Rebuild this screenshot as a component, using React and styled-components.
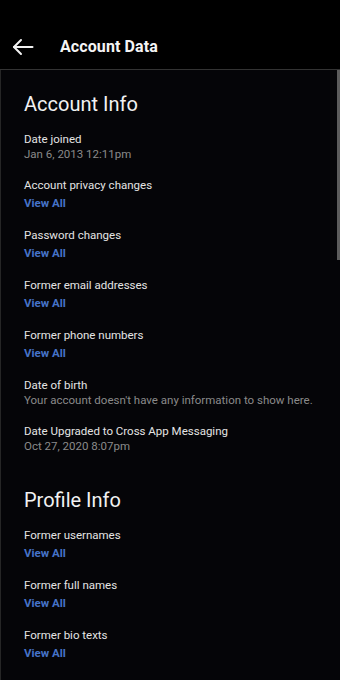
import React from "react"
import styled, { createGlobalStyle } from "styled-components"

const GlobalStyle = createGlobalStyle`
  html, body {
    margin: 0;
    padding: 0;
    background: #000;
  }
  body {
    font-family: Roboto, "Liberation Sans", sans-serif;
    -webkit-font-smoothing: antialiased;
  }
`
const Screen = styled.div`
  width: 340px;
  height: 680px;
  display: flex;
  flex-direction: column;
  background: #000;
  overflow: hidden;
`
const Header = styled.div`
  height: 45px;
  padding-top: 24px;
  display: flex;
  align-items: center;
  border-bottom: 1px solid #333;
`
const BackButton = styled.div`
  width: 24px;
  height: 24px;
  margin-left: 11px;
  margin-right: 25px;
  display: flex;
  color: #f2f2f2;
`
const Title = styled.h1`
  margin: 0;
  font-size: 16px;
  font-weight: 700;
  color: #f4f4f4;
  letter-spacing: 0.1px;
`
const Panel = styled.div`
  position: relative;
  flex: 1;
  background: #050508;
  border-left: 1px solid #262626;
  padding: 22px 0 0 23px;
`
const ScrollThumb = styled.div`
  position: absolute;
  top: 0;
  right: 0;
  width: 3px;
  height: 190px;
  background: #5c5c5c;
`
const Section = styled.section`
  display: flex;
  flex-direction: column;
  gap: 16px;
  & + & {
    margin-top: 35px;
  }
`
const SectionTitle = styled.h2`
  margin: 0 0 -1px;
  font-size: 20px;
  line-height: 24px;
  font-weight: 400;
  color: #f2f2f2;
`
const Item = styled.div`
  display: flex;
  flex-direction: column;
  font-size: 11.5px;
`
const Label = styled.div`
  line-height: 16px;
  color: #e4e4e4;
`
const Value = styled.div`
  line-height: 14px;
  color: #8a8a8a;
`
const Link = styled.a`
  margin-top: 2px;
  line-height: 16px;
  font-weight: 700;
  color: #4673c8;
  text-decoration: none;
`

const sections = [
  {
    title: "Account Info",
    items: [
      { label: "Date joined", value: "Jan 6, 2013 12:11pm" },
      { label: "Account privacy changes" },
      { label: "Password changes" },
      { label: "Former email addresses" },
      { label: "Former phone numbers" },
      { label: "Date of birth", value: "Your account doesn't have any information to show here." },
      { label: "Date Upgraded to Cross App Messaging", value: "Oct 27, 2020 8:07pm" },
    ],
  },
  {
    title: "Profile Info",
    items: [
      { label: "Former usernames" },
      { label: "Former full names" },
      { label: "Former bio texts" },
    ],
  },
]

const App = () => {
  return (
    <Screen>
      <GlobalStyle />
      <Header>
        <BackButton>
          <svg width="24" height="24" viewBox="0 0 24 24" fill="none" stroke="currentColor" strokeWidth="2" strokeLinecap="round" strokeLinejoin="round">
            <path d="M21.5 12H3" />
            <path d="M10 5l-7 7 7 7" />
          </svg>
        </BackButton>
        <Title>Account Data</Title>
      </Header>
      <Panel>
        <ScrollThumb />
        {sections.map(section => (
          <Section key={section.title}>
            <SectionTitle>{section.title}</SectionTitle>
            {section.items.map(item => (
              <Item key={item.label}>
                <Label>{item.label}</Label>
                {item.value ? <Value>{item.value}</Value> : <Link href="#">View All</Link>}
              </Item>
            ))}
          </Section>
        ))}
      </Panel>
    </Screen>
  )
}

export default App
